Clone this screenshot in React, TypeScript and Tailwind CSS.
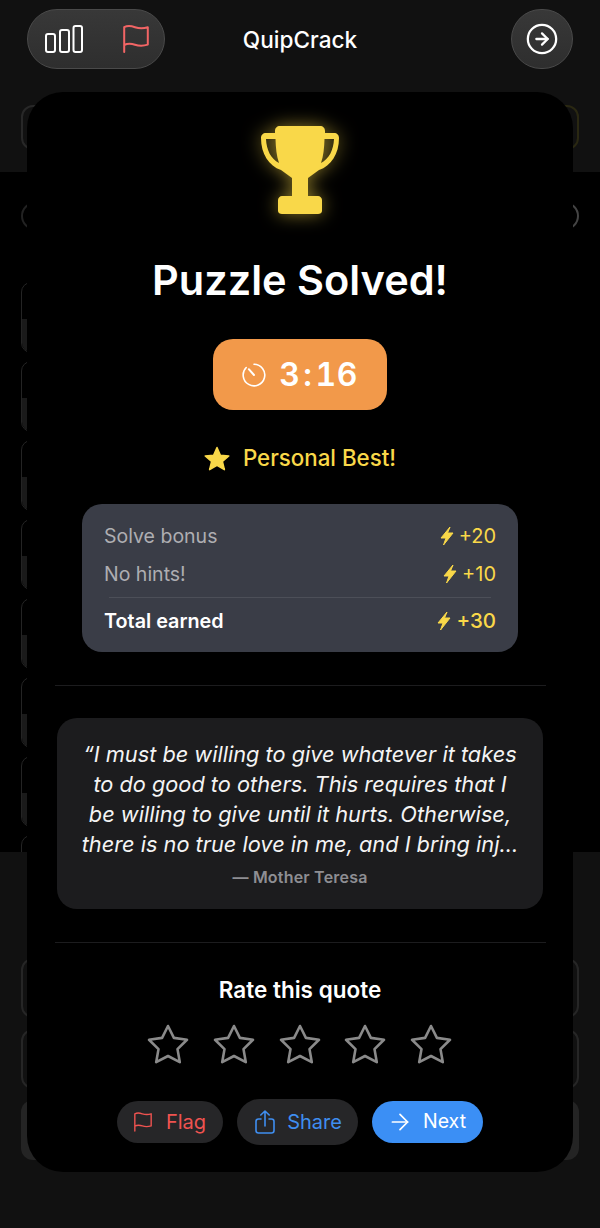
import React from 'react';
import { CircleArrowRight, ArrowRight } from 'lucide-react';

const GridRow = () => (
  <div className="h-[71px] w-[500px] shrink-0 flex flex-col rounded-[10px] border border-[#242424] overflow-hidden">
    <div className="h-[36px]" />
    <div className="flex-1 bg-[#1a1a1a]" />
  </div>
);

const FlagIcon = ({ className }: { className: string }) => (
  <svg viewBox="0 0 26 28" fill="none" stroke="currentColor" strokeWidth="2" strokeLinecap="round" strokeLinejoin="round" className={className}>
    <path d="M1.2 27V2.2C5 0.2 8.5 1 12 2.2C16 3.5 20.5 3.6 24.8 2.2V19.6C20.5 21 16 21 12 19.7C8.5 18.5 5 18 1.2 20" />
  </svg>
);

const Bolt = ({ className }: { className: string }) => (
  <svg viewBox="-1 -1 14 20" className={className} fill="currentColor" stroke="currentColor" strokeWidth="1" strokeLinejoin="round">
    <polygon points="9,0 0,11 5,11 2.5,18 12,6 6.5,6" />
  </svg>
);

const RateStar = () => (
  <svg viewBox="0 0 42 42" className="w-[42px] h-[42px]" fill="none" stroke="#8a8a8a" strokeWidth="2.6" strokeLinejoin="round">
    <polygon points="21,3 26.9,14.9 40,16.8 30.5,26.1 32.8,39.2 21,33 9.2,39.2 11.5,26.1 2,16.8 15.1,14.9" />
  </svg>
);

const BonusRow = ({ label, value, className, valueClass }: { label: string; value: string; className: string; valueClass: string }) => (
  <div className={`flex items-center justify-between ${className}`}>
    <span>{label}</span>
    <span className={`flex items-center gap-[5px] text-[#f9d849] ${valueClass}`}>
      <Bolt className="w-[14px] h-[20px]" />
      {value}
    </span>
  </div>
);

export default function App() {
  return (
    <div className="relative w-[600px] h-[1228px] overflow-hidden bg-black text-white font-['Inter',sans-serif]">
      {/* Game screen behind the modal */}
      <div className="bg-[#111111] h-[172px] px-[27px] pt-[9px]">
        <div className="grid grid-cols-[1fr_auto_1fr] items-center h-[60px]">
          <div className="w-[138px] h-[60px] flex items-center justify-between pl-[17px] pr-[15px] rounded-full border border-[#4a4a4a] bg-gradient-to-b from-[#383838] to-[#2e2e2e]">
            <svg width="38" height="28" viewBox="0 0 38 28" fill="none" stroke="white" strokeWidth="2">
              <rect x="1" y="9" width="9" height="18" rx="2" />
              <rect x="15" y="5" width="9" height="22" rx="2" />
              <rect x="28.5" y="1" width="8.5" height="26" rx="2" />
            </svg>
            <FlagIcon className="w-[26px] h-[28px] text-[#f26565]" />
          </div>
          <span className="text-[22.6px] leading-[28px] font-medium pt-[2px]">QuipCrack</span>
          <div className="justify-self-end w-[62px] h-[60px] flex items-center justify-center rounded-full border border-[#4a4a4a] bg-gradient-to-b from-[#383838] to-[#2e2e2e]">
            <CircleArrowRight size={34} strokeWidth={1.6} className="text-white" />
          </div>
        </div>
        <div className="flex justify-between -mx-[6px] mt-[36px]">
          <div className="w-[120px] h-[45px] rounded-[12px] border-2 border-[#282828]" />
          <div className="w-[120px] h-[45px] rounded-[12px] border-2 border-[#2a2812]" />
        </div>
      </div>
      <div className="h-[680px] bg-black overflow-hidden px-[21px] pt-[30px]">
        <div className="flex justify-between">
          <div className="w-[28px] h-[28px] rounded-full border-2 border-[#222222]" />
          <div className="w-[28px] h-[28px] rounded-full border-2 border-[#444444]" />
        </div>
        <div className="flex flex-col gap-[8px] mt-[52px]">
          <GridRow />
          <GridRow />
          <GridRow />
          <GridRow />
          <GridRow />
          <GridRow />
          <GridRow />
          <GridRow />
        </div>
      </div>
      <div className="h-[376px] bg-[#111111] px-[21px] pt-[106px] flex flex-col gap-[11px]">
        <div className="h-[60px] rounded-[12px] border-2 border-[#262626]" />
        <div className="h-[60px] rounded-[12px] border-2 border-[#262626]" />
        <div className="h-[60px] rounded-[12px] bg-[#242424]" />
      </div>

      {/* Modal */}
      <div className="absolute left-[27px] top-[92px] w-[546px] h-[1080px] rounded-[36px] bg-black flex flex-col items-center pt-[34px]">
        <svg viewBox="0 0 78 88" className="w-[78px] h-[88px] drop-shadow-[0_0_9px_rgba(249,216,73,0.55)]" fill="#f9d849" fillRule="evenodd">
          <path d="M19 0H59C62 0 64 2 64 5V7H73C76 7 78 9 78 12C78 28 70 40 58 44L47 52V70H57C59 70 61 72 61 74V85C61 87 59 88 57 88H21C19 88 17 87 17 85V74C17 72 19 70 21 70H31V52L20 44C8 40 0 28 0 12C0 9 2 7 5 7H14V5C14 2 16 0 19 0ZM5 13H14.5C14.8 22 15.5 30 18 37C10 33 5.5 24 5 13ZM73 13H63.5C63.2 22 62.5 30 60 37C68 33 72.5 24 73 13Z" />
        </svg>
        <h1 className="text-[41.5px] leading-[50px] font-semibold mt-[41px]">Puzzle Solved!</h1>
        <div className="w-[174px] h-[71px] mt-[34px] rounded-[20px] bg-[#f2994a] flex items-center justify-center gap-[13px]">
          <svg viewBox="0 0 24 24" className="w-[24px] h-[24px]" fill="none" stroke="white" strokeWidth="1.6" strokeLinecap="round">
            <path d="M12 1.2A10.8 10.8 0 1 1 4.2 4.5" />
            <path d="M12 12L6.8 6.2" strokeWidth="2" />
          </svg>
          <span className="flex items-center text-[32px] leading-none font-semibold tabular-nums tracking-[0.5px]">
            3<span className="mx-[3px]">:</span>16
          </span>
        </div>
        <div className="flex items-center gap-[13px] mt-[35px] h-[26px] text-[#f9d849] text-[22.3px] font-[550]">
          <svg viewBox="0 0 26 25" className="w-[26px] h-[25px]" fill="currentColor" stroke="currentColor" strokeWidth="1.5" strokeLinejoin="round">
            <polygon points="13,1.5 16.4,9.3 24.8,10 18.4,15.5 20.4,23.7 13,19.3 5.6,23.7 7.6,15.5 1.2,10 9.6,9.3" />
          </svg>
          Personal Best!
        </div>
        <div className="w-[436px] h-[148px] mt-[33px] rounded-[20px] bg-[#3a3d47] px-[22px] pt-[17px] text-[19.5px] leading-[30px]">
          <BonusRow label="Solve bonus" value="+20" className="text-[#aeaeb2]" valueClass="text-[20px] font-normal" />
          <BonusRow label="No hints!" value="+10" className="text-[#aeaeb2] mt-[8px]" valueClass="text-[20px] font-normal" />
          <div className="h-px bg-[#4c4f58] mx-[5px] mt-[8px]" />
          <BonusRow label="Total earned" value="+30" className="text-[19.8px] font-semibold mt-[8px]" valueClass="text-[20.5px] font-medium" />
        </div>
        <div className="w-[491px] h-px bg-[#1c1c1e] mt-[33px]" />
        <div className="w-[486px] h-[191px] mt-[32px] rounded-[20px] bg-[#1c1c1e] pt-[21px] flex flex-col items-center">
          <p className="w-[440px] text-center text-[21.75px] leading-[30px] italic text-[#f4f4f4]">
            “I must be willing to give whatever it takes to do good to others. This requires that I be willing to give until it hurts. Otherwise, there is no true love in me, and I bring inj...
          </p>
          <span className="mt-[8px] text-[16px] leading-[20px] font-semibold text-[#8e8e93] tracking-[0.2px]">— Mother Teresa</span>
        </div>
        <div className="w-[491px] h-px bg-[#1c1c1e] mt-[33px]" />
        <div className="mt-[33px] text-[22.5px] leading-[28px] font-semibold">Rate this quote</div>
        <div className="flex gap-[23.75px] mt-[19px] -ml-[1px]">
          <RateStar />
          <RateStar />
          <RateStar />
          <RateStar />
          <RateStar />
        </div>
        <div className="flex items-center gap-[14px] mt-[34px]">
          <button className="w-[106px] h-[42px] rounded-full bg-[#262628] flex items-center justify-center gap-[14px] text-[20px] text-[#ef5350]">
            <FlagIcon className="w-[18px] h-[20px]" />
            Flag
          </button>
          <button className="w-[121px] h-[46px] rounded-full bg-[#262628] flex items-center justify-center gap-[12px] pl-[2px] text-[20px] text-[#3f8ef0]">
            <svg viewBox="0 0 20 24" className="w-[20px] h-[24px]" fill="none" stroke="currentColor" strokeWidth="1.6" strokeLinecap="round" strokeLinejoin="round">
              <path d="M6 9H3.5C2.1 9 1 10.1 1 11.5V20.5C1 21.9 2.1 23 3.5 23H16.5C17.9 23 19 21.9 19 20.5V11.5C19 10.1 17.9 9 16.5 9H14" />
              <path d="M10 16V1M5.8 5L10 1L14.2 5" />
            </svg>
            Share
          </button>
          <button className="w-[111px] h-[42px] rounded-full bg-[#3b8ff5] flex items-center justify-center gap-[10px] pr-[2px] text-[19.5px] text-white">
            <ArrowRight size={26} strokeWidth={1.6} />
            Next
          </button>
        </div>
      </div>
    </div>
  );
}
